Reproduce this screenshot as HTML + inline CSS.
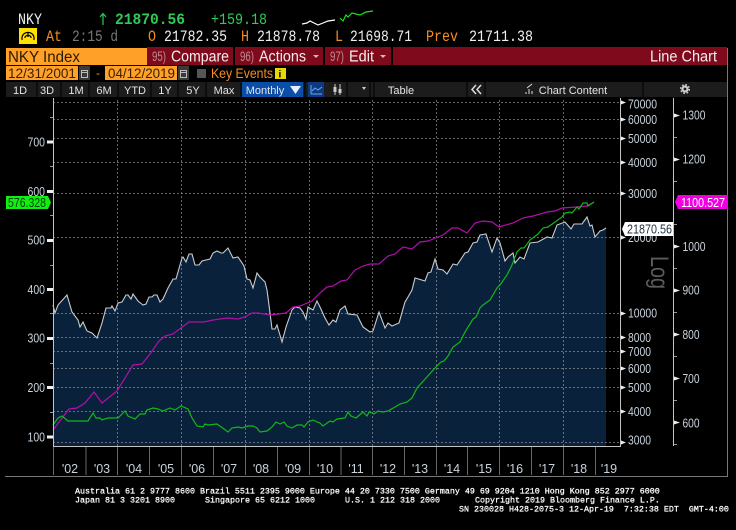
<!DOCTYPE html>
<html><head><meta charset="utf-8"><style>
html,body{margin:0;padding:0;background:#000;width:736px;height:530px;overflow:hidden}
svg{display:block}
text{font-family:"Liberation Sans",sans-serif}
.m{font-family:"Liberation Mono",monospace;font-size:15.500px}
.g line{stroke:#9a9a9a;stroke-width:1;stroke-dasharray:2 2;opacity:.65}
.l{font-size:12.500px;fill:#c9d3dc}
.b{font-size:11px;fill:#e4e4e4}
.f{font-family:"Liberation Mono",monospace;font-size:8.330px;fill:#fff;stroke:#fff;stroke-width:.25}
</style></head><body>
<svg width="736" height="530" viewBox="0 0 736 530" xmlns="http://www.w3.org/2000/svg">
<rect width="736" height="530" fill="#000"/>
<!-- header -->
<text x="18" y="24" class="m" fill="#f0f0f0" textLength="24" lengthAdjust="spacingAndGlyphs">NKY</text>
<path d="M103 25V14M100 17L103 13.500L106 17" stroke="#2ecc55" stroke-width="1.200" fill="none"/>
<text x="115" y="24" class="m" font-weight="bold" fill="#2ecc55" textLength="70" lengthAdjust="spacingAndGlyphs">21870.56</text>
<text x="211" y="24" class="m" fill="#2ecc55" textLength="56" lengthAdjust="spacingAndGlyphs">+159.18</text>
<polyline points="302,24 307,23 310,21 314,23 318,25 323,23 328,21 335,20" fill="none" stroke="#fff" stroke-width="1.200"/>
<polyline points="340,18 343,21 346,15 348,17 352,13 360,15 366,12 373,11" fill="none" stroke="#1fe01f" stroke-width="1.200"/>
<rect x="19" y="28" width="18" height="16" fill="#ffe000"/>
<path d="M22 40V37A6.200 6.200 0 0 1 34 37V40M25 38V37A3.500 3.500 0 0 1 31 37V38M28 33V37" fill="none" stroke="#000" stroke-width="1.200"/>
<text x="46" y="41" fill="#f68c1e" class="m" textLength="16" lengthAdjust="spacingAndGlyphs">At</text>
<text x="72" y="41" fill="#777" class="m" textLength="46" lengthAdjust="spacingAndGlyphs">2:15 d</text>
<text x="148" y="41" fill="#f68c1e" class="m" textLength="8" lengthAdjust="spacingAndGlyphs">O</text>
<text x="164" y="41" fill="#eee" class="m" textLength="63" lengthAdjust="spacingAndGlyphs">21782.35</text>
<text x="241" y="41" fill="#f68c1e" class="m" textLength="8" lengthAdjust="spacingAndGlyphs">H</text>
<text x="257" y="41" fill="#eee" class="m" textLength="63" lengthAdjust="spacingAndGlyphs">21878.78</text>
<text x="335" y="41" fill="#f68c1e" class="m" textLength="8" lengthAdjust="spacingAndGlyphs">L</text>
<text x="350" y="41" fill="#eee" class="m" textLength="62" lengthAdjust="spacingAndGlyphs">21698.71</text>
<text x="426" y="41" fill="#f68c1e" class="m" textLength="32" lengthAdjust="spacingAndGlyphs">Prev</text>
<text x="469" y="41" fill="#eee" class="m" textLength="64" lengthAdjust="spacingAndGlyphs">21711.38</text>
<!-- title row -->
<rect x="6" y="48" width="141" height="17" fill="#ffa028"/>
<text x="8" y="62" font-size="15.500" fill="#2a1a00" textLength="72" lengthAdjust="spacingAndGlyphs">NKY Index</text>
<rect x="147" y="47" width="86" height="18" fill="#7f0a1c"/>
<rect x="235" y="47" width="88" height="18" fill="#7f0a1c"/>
<rect x="325" y="47" width="66" height="18" fill="#7f0a1c"/>
<rect x="393" y="47" width="334" height="18" fill="#7f0a1c"/>
<text x="152" y="61" font-size="14" fill="#c08a92" textLength="14" lengthAdjust="spacingAndGlyphs">95)</text>
<text x="171" y="61.500" font-size="15.500" fill="#f2eeee" textLength="58" lengthAdjust="spacingAndGlyphs">Compare</text>
<text x="240" y="61" font-size="14" fill="#c08a92" textLength="14" lengthAdjust="spacingAndGlyphs">96)</text>
<text x="259" y="61.500" font-size="15.500" fill="#f2eeee" textLength="47" lengthAdjust="spacingAndGlyphs">Actions</text>
<path d="M313 55H319L316 58Z" fill="#d8b8bc"/>
<text x="330" y="61" font-size="14" fill="#c08a92" textLength="14" lengthAdjust="spacingAndGlyphs">97)</text>
<text x="349" y="61.500" font-size="15.500" fill="#f2eeee" textLength="25" lengthAdjust="spacingAndGlyphs">Edit</text>
<path d="M380 55H386L383 58Z" fill="#d8b8bc"/>
<text x="650" y="61.500" font-size="15.500" fill="#f2eeee" textLength="67" lengthAdjust="spacingAndGlyphs">Line Chart</text>
<!-- date row -->
<rect x="6" y="66" width="72" height="14" fill="#ffa028"/>
<text x="8" y="78" font-size="13.500" fill="#3a2000" textLength="68" lengthAdjust="spacingAndGlyphs">12/31/2001</text>
<rect x="79" y="66" width="11" height="14" fill="#3a3a3a"/>
<path d="M81.500 70.500H87.500V77.500H81.500ZM81.500 72.500H87.500" fill="none" stroke="#bbb"/>
<text x="96" y="77" font-size="12" fill="#f68c1e">-</text>
<rect x="105" y="66" width="72" height="14" fill="#ffa028"/>
<text x="108" y="78" font-size="13.500" fill="#3a2000" textLength="67" lengthAdjust="spacingAndGlyphs">04/12/2019</text>
<rect x="178" y="66" width="11" height="14" fill="#3a3a3a"/>
<path d="M180.500 70.500H186.500V77.500H180.500ZM180.500 72.500H186.500" fill="none" stroke="#bbb"/>
<rect x="197" y="69" width="9" height="9" fill="#555"/>
<text x="211" y="78" font-size="14" fill="#f68c1e" textLength="62" lengthAdjust="spacingAndGlyphs">Key Events</text>
<rect x="275" y="68" width="11" height="11" fill="#e8d800"/>
<text x="278.500" y="77.500" font-size="10" font-weight="bold" fill="#000">i</text>
<!-- buttons -->
<rect x="6" y="82" width="721" height="15" fill="#1c1c1c"/>
<rect x="242" y="82" width="61" height="15" fill="#0b4ea8"/>
<rect x="308" y="82" width="16" height="15" fill="#0b3a80"/>
<path d="M311 94V85M311 94H322M312 91L315 88L318 90L322 87" fill="none" stroke="#6fa8e8"/>
<path d="M335 84V95M340 84V95" stroke="#ccc"/><rect x="333.500" y="87" width="3" height="5" fill="#ccc"/><rect x="338.500" y="89" width="3" height="4" fill="#ccc"/>
<g stroke="#000"><line x1="37" y1="82" x2="37" y2="97"/><line x1="61" y1="82" x2="61" y2="97"/><line x1="89" y1="82" x2="89" y2="97"/><line x1="118" y1="82" x2="118" y2="97"/><line x1="151" y1="82" x2="151" y2="97"/><line x1="178" y1="82" x2="178" y2="97"/><line x1="206" y1="82" x2="206" y2="97"/><line x1="241" y1="82" x2="241" y2="97"/><line x1="305" y1="82" x2="305" y2="97"/><line x1="347" y1="82" x2="347" y2="97"/><line x1="370" y1="82" x2="370" y2="97"/><line x1="374" y1="82" x2="374" y2="97"/><line x1="467" y1="82" x2="467" y2="97"/><line x1="485" y1="82" x2="485" y2="97"/><line x1="643" y1="82" x2="643" y2="97"/></g>
<g text-anchor="middle">
<text x="20" y="94" class="b">1D</text><text x="47" y="94" class="b">3D</text><text x="76" y="94" class="b">1M</text><text x="104" y="94" class="b">6M</text><text x="135" y="94" class="b">YTD</text><text x="165" y="94" class="b">1Y</text><text x="193" y="94" class="b">5Y</text><text x="224" y="94" class="b">Max</text>
<text x="265" y="94" class="b">Monthly</text>
<text x="401" y="94" class="b">Table</text>
<text x="573" y="94" class="b">Chart Content</text>
</g>
<path d="M290 86H301L295.500 94Z" fill="#e8f0ff"/>
<path d="M362 87H366L364 90Z" fill="#ccc"/>
<path d="M476 85L472 89.500L476 94M481 85L477 89.500L481 94" fill="none" stroke="#ddd" stroke-width="1.500"/>
<path d="M526 94V92M529 94V89M532 94V91M527 88L532 84" stroke="#ddd" fill="none"/>
<circle cx="685" cy="89" r="2.500" fill="none" stroke="#ccc" stroke-width="2.200"/>
<circle cx="685" cy="89" r="4.300" fill="none" stroke="#ccc" stroke-width="1.500" stroke-dasharray="1.700 1.700"/>
<!-- fill -->
<path fill="#0a213b" d="M53 446V305L55 313L58 305L67 295L72 312L78 320L80 327L83 322L87 331L92 333L97 338L102 323L106 308L111 308L112 306L115 311L118 303L122 302L126 295L128 295L131 299L133 294L138 301L143 305L146 304L149 297L152 297L154 295L157 295L160 302L163 299L168 288L173 279L176 279L182 258L183 257L186 262L189 254L192 254L195 265L199 265L202 261L206 260L210 259L213 253L217 251L221 253L223 253L228 248L233 258L238 257L244 266L247 279L250 280L253 288L257 273L260 277L265 282L267 290L269 305L272 329L275 329L277 325L282 342L286 327L292 310L295 307L300 308L303 312L306 319L308 307L313 310L317 301L320 307L325 318L329 325L333 320L336 322L340 310L345 306L348 314L357 315L363 327L370 332L373 331L379 312L385 328L388 323L392 326L399 323L405 302L408 297L412 290L415 278L425 281L428 273L431 272L435 259L438 269L443 270L447 274L453 264L457 265L465 253L468 252L473 243L477 242L480 235L486 234L488 240L492 252L497 238L500 243L505 261L508 257L513 253L515 263L520 257L524 259L530 243L538 242L547 237L552 238L557 225L565 222L571 229L574 224L582 224L587 217L590 226L592 225L595 237L600 231L603 230L606 228V446Z"/>
<!-- grid -->
<g class="g">
<line x1="53" x2="620" y1="119.500" y2="119.500"/><line x1="53" x2="620" y1="138.500" y2="138.500"/><line x1="53" x2="620" y1="162.500" y2="162.500"/><line x1="53" x2="620" y1="193.500" y2="193.500"/><line x1="53" x2="620" y1="237.500" y2="237.500"/><line x1="53" x2="620" y1="313.500" y2="313.500"/><line x1="53" x2="620" y1="337.500" y2="337.500"/><line x1="53" x2="620" y1="351.500" y2="351.500"/><line x1="53" x2="620" y1="368.500" y2="368.500"/><line x1="53" x2="620" y1="387.500" y2="387.500"/><line x1="53" x2="620" y1="411.500" y2="411.500"/><line x1="53" x2="620" y1="442.500" y2="442.500"/><line x1="53" x2="620" y1="102.500" y2="102.500"/>
<line y1="100" y2="446" x1="117.500" x2="117.500"/><line y1="100" y2="446" x1="181.500" x2="181.500"/><line y1="100" y2="446" x1="245.500" x2="245.500"/><line y1="100" y2="446" x1="309.500" x2="309.500"/><line y1="100" y2="446" x1="372.500" x2="372.500"/><line y1="100" y2="446" x1="436.500" x2="436.500"/><line y1="100" y2="446" x1="499.500" x2="499.500"/><line y1="100" y2="446" x1="563.500" x2="563.500"/>
</g>
<!-- lines -->
<polyline fill="none" stroke="#c9ccd0" stroke-width="1.100" points="53,305 55,313 58,305 67,295 72,312 78,320 80,327 83,322 87,331 92,333 97,338 102,323 106,308 111,308 112,306 115,311 118,303 122,302 126,295 128,295 131,299 133,294 138,301 143,305 146,304 149,297 152,297 154,295 157,295 160,302 163,299 168,288 173,279 176,279 182,258 183,257 186,262 189,254 192,254 195,265 199,265 202,261 206,260 210,259 213,253 217,251 221,253 223,253 228,248 233,258 238,257 244,266 247,279 250,280 253,288 257,273 260,277 265,282 267,290 269,305 272,329 275,329 277,325 282,342 286,327 292,310 295,307 300,308 303,312 306,319 308,307 313,310 317,301 320,307 325,318 329,325 333,320 336,322 340,310 345,306 348,314 357,315 363,327 370,332 373,331 379,312 385,328 388,323 392,326 399,323 405,302 408,297 412,290 415,278 425,281 428,273 431,272 435,259 438,269 443,270 447,274 453,264 457,265 465,253 468,252 473,243 477,242 480,235 486,234 488,240 492,252 497,238 500,243 505,261 508,257 513,253 515,263 520,257 524,259 530,243 538,242 547,237 552,238 557,225 565,222 571,229 574,224 582,224 587,217 590,226 592,225 595,237 600,231 603,230 606,228"/>
<polyline fill="none" stroke="#b010a8" stroke-width="1.200" points="53,430 69,409 77,408 85,403 94,392 102,403 117,391 133,365 142,364 150,354 159,341 165,336 173,334 189,322 204,322 213,320 227,318 238,319 245,317 252,313 258,313 270,315 286,313 293,307 300,306 312,301 320,293 327,287 333,286 341,281 347,280 355,270 363,266 370,264 379,264 388,256 395,254 403,247 412,249 420,242 428,241 443,235 452,228 458,228 467,233 475,223 483,221 492,222 499,227 513,223 523,218 533,216 547,212 555,211 562,208 577,207 587,206 594,202"/>
<polyline fill="none" stroke="#10b818" stroke-width="1.200" points="53,425 58,418 62,416 68,421 75,421 88,421 93,413 96,418 100,418 102,420 108,418 118,418 125,411 128,416 135,419 140,414 145,414 147,410 153,408 158,409 163,411 170,408 175,410 181,406 188,409 192,418 197,426 203,427 205,424 208,425 217,424 224,429 228,432 232,428 238,427 242,428 248,426 253,426 257,428 260,432 267,431 272,427 276,422 280,424 284,422 287,426 292,428 297,425 302,425 304,427 308,422 313,420 317,422 320,423 323,426 330,421 333,422 337,419 345,418 348,412 351,416 356,418 363,412 367,416 369,412 374,414 378,411 383,412 388,411 395,407 400,404 407,402 412,398 417,388 435,368 441,362 444,361 448,356 453,347 460,342 465,332 473,319 476,317 480,308 483,305 490,300 497,288 500,285 507,275 512,265 517,252 521,248 524,248 530,240 538,234 543,228 548,227 562,217 565,213 570,212 572,213 577,207 579,209 583,203 587,203 588,206 594,202"/>
<!-- axes -->
<path d="M53.500 98V446.500H620.500V98M673.500 98V446" fill="none" stroke="#c4c4c4"/>
<path d="M5 476.500H727.500V48" fill="none" stroke="#777"/>
<path d="M53.500 447V475M86 447V475M117.500 447V475M149.500 447V475M181.500 447V475M213.500 447V475M245.500 447V475M277.500 447V475M309.500 447V475M341 447V475M372.500 447V475M404.500 447V475M436.500 447V475M467.500 447V475M499.500 447V475M531.500 447V475M563.500 447V475M595.500 447V475" stroke="#666" fill="none"/>
<g fill="#eee">
<path d="M47 140.500H53V143.500H47ZM47 190H53V193H47ZM47 239H53V242H47ZM47 288H53V291H47ZM47 337H53V340H47ZM47 386H53V389H47ZM47 435.500H53V438.500H47Z"/>
<path d="M621 100.500L626 102.500L621 104.500ZM621 117.500L626 119.500L621 121.500ZM621 136.500L626 138.500L621 140.500ZM621 160.500L626 162.500L621 164.500ZM621 191.500L626 193.500L621 195.500ZM621 235.500L626 237.500L621 239.500ZM621 311.500L626 313.500L621 315.500ZM621 335.500L626 337.500L621 339.500ZM621 349.500L626 351.500L621 353.500ZM621 366.500L626 368.500L621 370.500ZM621 385.500L626 387.500L621 389.500ZM621 409.500L626 411.500L621 413.500ZM621 440.500L626 442.500L621 444.500Z"/>
<path d="M674 113.500L680 115.500L674 117.500ZM674 157.500L680 159.500L674 161.500ZM674 244.500L680 246.500L674 248.500ZM674 288.500L680 290.500L674 292.500ZM674 332.500L680 334.500L674 336.500ZM674 376.500L680 378.500L674 380.500ZM674 420.500L680 422.500L674 424.500Z"/>
</g>
<path d="M674 137.500H677M674 181.500H677M674 224.500H677M674 268.500H677M674 312.500H677M674 356.500H677M674 400.500H677M674 444.500H677M50 117.500H53M50 166.500H53M50 215.500H53M50 265.500H53M50 313.500H53M50 363.500H53M50 412.500H53" stroke="#999" fill="none"/>
<g text-anchor="end">
<text x="45" y="146.500" class="l" textLength="17.500" lengthAdjust="spacingAndGlyphs">700</text><text x="45" y="196" class="l" textLength="17.500" lengthAdjust="spacingAndGlyphs">600</text><text x="45" y="244.500" class="l" textLength="17.500" lengthAdjust="spacingAndGlyphs">500</text><text x="45" y="294" class="l" textLength="17.500" lengthAdjust="spacingAndGlyphs">400</text><text x="45" y="342.500" class="l" textLength="17.500" lengthAdjust="spacingAndGlyphs">300</text><text x="45" y="392" class="l" textLength="17.500" lengthAdjust="spacingAndGlyphs">200</text><text x="45" y="441.500" class="l" textLength="17.500" lengthAdjust="spacingAndGlyphs">100</text>
</g>
<g>
<text x="628" y="108.500" class="l" textLength="29" lengthAdjust="spacingAndGlyphs">70000</text><text x="628" y="124" class="l" textLength="29" lengthAdjust="spacingAndGlyphs">60000</text><text x="628" y="143" class="l" textLength="29" lengthAdjust="spacingAndGlyphs">50000</text><text x="628" y="167" class="l" textLength="29" lengthAdjust="spacingAndGlyphs">40000</text><text x="628" y="198" class="l" textLength="29" lengthAdjust="spacingAndGlyphs">30000</text><text x="628" y="242" class="l" textLength="29" lengthAdjust="spacingAndGlyphs">20000</text><text x="628" y="317.500" class="l" textLength="29" lengthAdjust="spacingAndGlyphs">10000</text><text x="628" y="342" class="l" textLength="23" lengthAdjust="spacingAndGlyphs">8000</text><text x="628" y="356" class="l" textLength="23" lengthAdjust="spacingAndGlyphs">7000</text><text x="628" y="373" class="l" textLength="23" lengthAdjust="spacingAndGlyphs">6000</text><text x="628" y="392" class="l" textLength="23" lengthAdjust="spacingAndGlyphs">5000</text><text x="628" y="416" class="l" textLength="23" lengthAdjust="spacingAndGlyphs">4000</text><text x="628" y="444.500" class="l" textLength="23" lengthAdjust="spacingAndGlyphs">3000</text>
<text x="682.500" y="119.500" class="l" textLength="23" lengthAdjust="spacingAndGlyphs">1300</text><text x="682.500" y="163.500" class="l" textLength="23" lengthAdjust="spacingAndGlyphs">1200</text><text x="682.500" y="251" class="l" textLength="23" lengthAdjust="spacingAndGlyphs">1000</text><text x="682.500" y="294.500" class="l" textLength="17" lengthAdjust="spacingAndGlyphs">900</text><text x="682.500" y="339" class="l" textLength="17" lengthAdjust="spacingAndGlyphs">800</text><text x="682.500" y="383" class="l" textLength="17" lengthAdjust="spacingAndGlyphs">700</text><text x="682.500" y="427.500" class="l" textLength="17" lengthAdjust="spacingAndGlyphs">600</text>
</g>
<g font-size="12.500" fill="#c9d3dc" text-anchor="middle">
<text x="70" y="473">'02</text><text x="102" y="473">'03</text><text x="134" y="473">'04</text><text x="166" y="473">'05</text><text x="197" y="473">'06</text><text x="229" y="473">'07</text><text x="261" y="473">'08</text><text x="293" y="473">'09</text><text x="325" y="473">'10</text><text x="356" y="473">'11</text><text x="388" y="473">'12</text><text x="420" y="473">'13</text><text x="452" y="473">'14</text><text x="484" y="473">'15</text><text x="515" y="473">'16</text><text x="547" y="473">'17</text><text x="579" y="473">'18</text><text x="609" y="473">'19</text>
</g>
<text transform="translate(651,256) rotate(90)" font-size="25" fill="#5c5c5c" textLength="33" lengthAdjust="spacingAndGlyphs">Log</text>
<!-- tags -->
<path d="M6 196H48L51 202.500L48 209H6Z" fill="#10f010"/>
<text x="8" y="207" font-size="12.500" fill="#06400a" textLength="38" lengthAdjust="spacingAndGlyphs">576.328</text>
<path d="M678 195H728V209H678L675 202Z" fill="#f000e0"/>
<text x="681" y="207" font-size="13" fill="#fff" textLength="44" lengthAdjust="spacingAndGlyphs">1100.527</text>
<path d="M625 222H673V236H625L622 229Z" fill="#fff"/>
<text x="627" y="233.500" font-size="13" fill="#243240" textLength="45" lengthAdjust="spacingAndGlyphs">21870.56</text>
<!-- footer -->
<text x="75" y="493.500" class="f" xml:space="preserve">Australia 61 2 9777 8600 Brazil 5511 2395 9000 Europe 44 20 7330 7500 Germany 49 69 9204 1210 Hong Kong 852 2977 6000</text>
<text x="75" y="502.500" class="f">Japan 81 3 3201 8900</text>
<text x="205" y="502.500" class="f">Singapore 65 6212 1000</text>
<text x="345" y="502.500" class="f">U.S. 1 212 318 2000</text>
<text x="475" y="502.500" class="f">Copyright 2019 Bloomberg Finance L.P.</text>
<text x="459" y="511.500" class="f" xml:space="preserve">SN 230028 H428-2075-3 12-Apr-19  7:32:38 EDT  GMT-4:00</text>
</svg>
</body></html>
